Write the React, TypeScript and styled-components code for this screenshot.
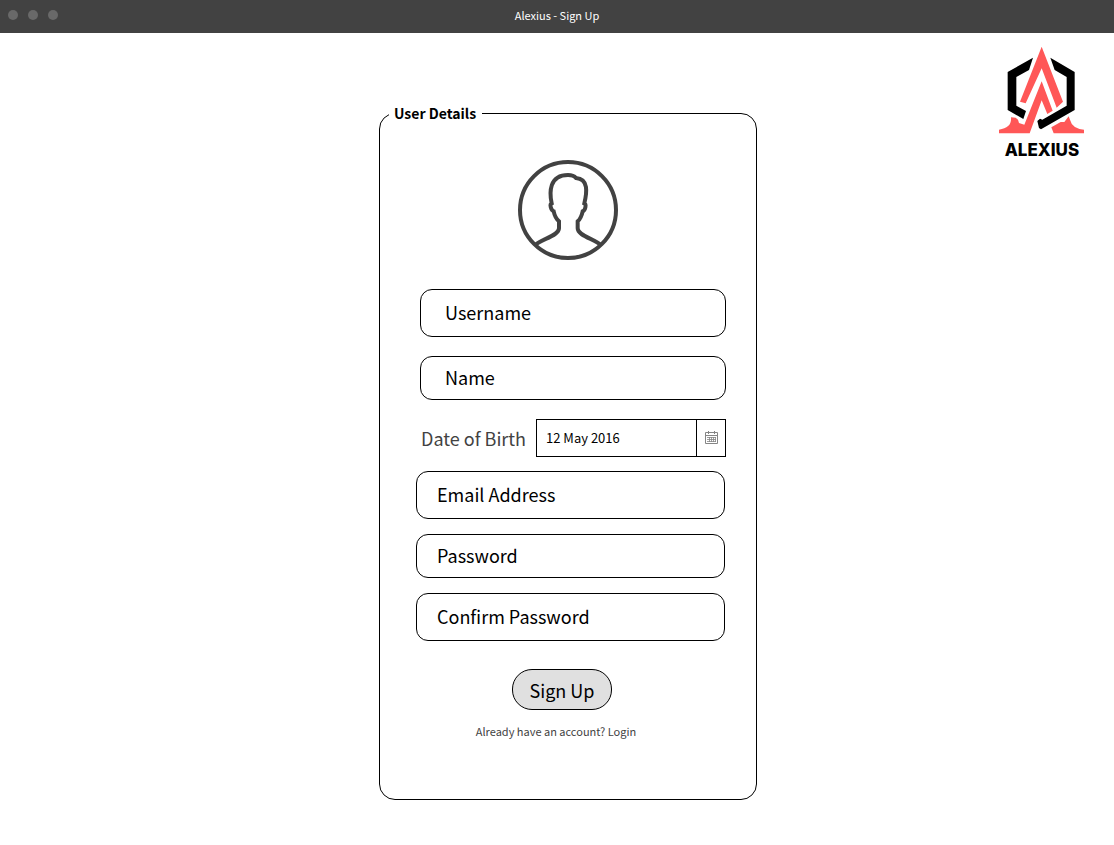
import React from 'react';
import styled, { createGlobalStyle } from 'styled-components';

const GlobalStyle = createGlobalStyle`
  *, *::before, *::after { box-sizing: border-box; }
  body {
    margin: 0;
    background: #fff;
    color: #000;
    font-family: "Noto Sans CJK SC", "Noto Sans", sans-serif;
  }
  input, button { font: inherit; color: inherit; }
`;

const TitleBar = styled.header`
  display: grid;
  grid-template-columns: 1fr auto 1fr;
  align-items: center;
  height: 33px;
  padding: 0 8px 3px;
  background: #424242;
  color: #fff;
`;

const WindowButtons = styled.div`
  display: flex;
  gap: 10px;
`;

const WindowButton = styled.button`
  width: 10px;
  height: 10px;
  padding: 0;
  border: 0;
  border-radius: 50%;
  background: #696969;
`;

const WindowTitle = styled.h1`
  margin: 0;
  font-size: 11px;
  font-weight: 400;
  line-height: 16px;
`;

const Page = styled.main`
  display: grid;
  grid-template-columns: 1fr minmax(0, 378px) 1fr;
  align-items: start;
  padding: 13px 29px 45px 51px;
`;

const Form = styled.form`
  grid-column: 2;
  padding-top: 57px;
`;

const Panel = styled.fieldset`
  display: flex;
  flex-direction: column;
  min-width: 0;
  margin: 0;
  padding: 36px 0 60px;
  border: 1px solid #000;
  border-radius: 16px;
`;

const PanelTitle = styled.legend`
  margin-left: 9px;
  padding: 0 6px 0 5px;
  font-size: 14px;
  font-weight: 700;
  line-height: 21px;
`;

const Avatar = styled.svg`
  align-self: center;
  width: 100px;
  height: 100px;
`;

const PersonalFields = styled.div`
  display: flex;
  flex-direction: column;
  gap: 19px;
  padding: 29px 30px 0 40px;
`;

const AccountFields = styled.div`
  display: flex;
  flex-direction: column;
  gap: 15px;
  padding: 14px 31px 0 36px;
`;

const TextField = styled.input<{ $size: 'regular' | 'tall'; $indent: number }>`
  width: 100%;
  height: ${({ $size }) => ($size === 'tall' ? 48 : 44)}px;
  padding: 0 ${({ $indent }) => $indent}px 3px;
  border: 1px solid #000;
  border-radius: 12px;
  background: #fff;
  font-size: 18px;

  &::placeholder { color: #000; opacity: 1; }
`;

const DateRow = styled.div`
  display: flex;
  align-items: center;
  justify-content: space-between;
`;

const DateLabel = styled.label`
  padding-left: 1px;
  color: #424242;
  font-size: 18px;
  line-height: 28px;
`;

const DatePicker = styled.div`
  display: flex;
  width: 190px;
  height: 38px;
  border: 1px solid #000;
`;

const DateInput = styled.input`
  flex: 1;
  min-width: 0;
  padding: 0 9px 1px;
  border: 0;
  background: #fff;
  font-size: 13px;
`;

const CalendarButton = styled.button`
  display: grid;
  place-items: center;
  width: 29px;
  padding: 0;
  border: 0;
  border-left: 1px solid #000;
  background: #fff;
`;

const Actions = styled.div`
  display: flex;
  flex-direction: column;
  align-items: center;
  padding: 28px 12px 0 0;
`;

const SubmitButton = styled.button`
  height: 41px;
  padding: 0 17px;
  border: 1px solid #000;
  border-radius: 20px;
  background: #e0e0e0;
  font-size: 18px;
`;

const LoginPrompt = styled.p`
  margin: 13px 0 0;
  padding-right: 12px;
  color: #424242;
  font-size: 11px;
  line-height: 16px;
`;

const LoginLink = styled.a`
  color: inherit;
  text-decoration: none;
`;

const Brand = styled.div`
  grid-column: 3;
  justify-self: end;
  display: flex;
  flex-direction: column;
  align-items: center;
`;

const BrandName = styled.span`
  margin-top: 6px;
  font-family: Inter, sans-serif;
  font-size: 17px;
  font-weight: 800;
  line-height: 20px;
`;

function BrandMark() {
  return (
    <svg width="86" height="88" viewBox="27 18 258 264" aria-hidden="true">
      <g fill="#000">
        <path d="M129 53 L53 96 V210 L100 237 L108 213 L79 197 V111 L117 90 Z" />
        <path d="M181 53 L254 96 V210 L153 268 L147 264 L142 243 L150 236 L157 239 L230 197 V111 L194 90 Z" />
      </g>
      <g fill="#ff5757">
        <path d="M155 20 L90 185 L107 190 L155 85 L200 203 L219 185 Z" />
        <path d="M155 124 L103 254 L87 249 L84 239 L77 233 L63 232 Q66 264 27 269 V280 H119 L155 181 L172 222 L188 212 Z" />
        <path d="M236 229 L240 239 Q246 265 282 269 V280 H191 L184 262 L212 246 L223 246 Z" />
      </g>
    </svg>
  );
}

function CalendarIcon() {
  return (
    <svg width="13" height="14" viewBox="0 0 13 14" fill="none" stroke="#858585" aria-hidden="true">
      <path d="M0.5 1.5h12v11h-12zM0.5 4.5h12M3.5 0v3M9.5 0v3" />
      <path d="M2 6.5h9M2 8.5h9M2 10.5h9M4.5 6v5M6.5 6v5M8.5 6v5M10.5 6v5" strokeWidth="0.8" />
    </svg>
  );
}

export default function App() {
  return (
    <>
      <GlobalStyle />
      <TitleBar>
        <WindowButtons>
          <WindowButton type="button" aria-label="Close" />
          <WindowButton type="button" aria-label="Minimize" />
          <WindowButton type="button" aria-label="Maximize" />
        </WindowButtons>
        <WindowTitle>Alexius - Sign Up</WindowTitle>
      </TitleBar>
      <Page>
        <Form onSubmit={(event) => event.preventDefault()}>
          <Panel>
            <PanelTitle>User Details</PanelTitle>
            <Avatar viewBox="27 30 300 300" fill="none" stroke="#424242" strokeWidth="12" aria-hidden="true">
              <circle cx="177" cy="180" r="144" />
              <path d="M79 285 C94 268 150 258 150 235 V214 C143 208 137 198 134 184 C126 181 121 163 128 160 C121 128 120 75 177 75 C188 75 196 78 201 84 C239 87 234 126 226 160 C233 163 229 181 221 184 C218 198 213 208 206 214 V235 C206 258 260 268 275 285" />
            </Avatar>
            <PersonalFields>
              <TextField $size="tall" $indent={24} type="text" placeholder="Username" aria-label="Username" />
              <TextField $size="regular" $indent={24} type="text" placeholder="Name" aria-label="Name" />
              <DateRow>
                <DateLabel htmlFor="birth-date">Date of Birth</DateLabel>
                <DatePicker>
                  <DateInput id="birth-date" type="text" defaultValue="12 May 2016" />
                  <CalendarButton type="button" aria-label="Choose a date">
                    <CalendarIcon />
                  </CalendarButton>
                </DatePicker>
              </DateRow>
            </PersonalFields>
            <AccountFields>
              <TextField $size="tall" $indent={20} type="email" placeholder="Email Address" aria-label="Email Address" />
              <TextField $size="regular" $indent={20} type="password" placeholder="Password" aria-label="Password" />
              <TextField $size="tall" $indent={20} type="password" placeholder="Confirm Password" aria-label="Confirm Password" />
            </AccountFields>
            <Actions>
              <SubmitButton type="submit">Sign Up</SubmitButton>
              <LoginPrompt>
                Already have an account? <LoginLink href="#login">Login</LoginLink>
              </LoginPrompt>
            </Actions>
          </Panel>
        </Form>
        <Brand>
          <BrandMark />
          <BrandName>ALEXIUS</BrandName>
        </Brand>
      </Page>
    </>
  );
}
